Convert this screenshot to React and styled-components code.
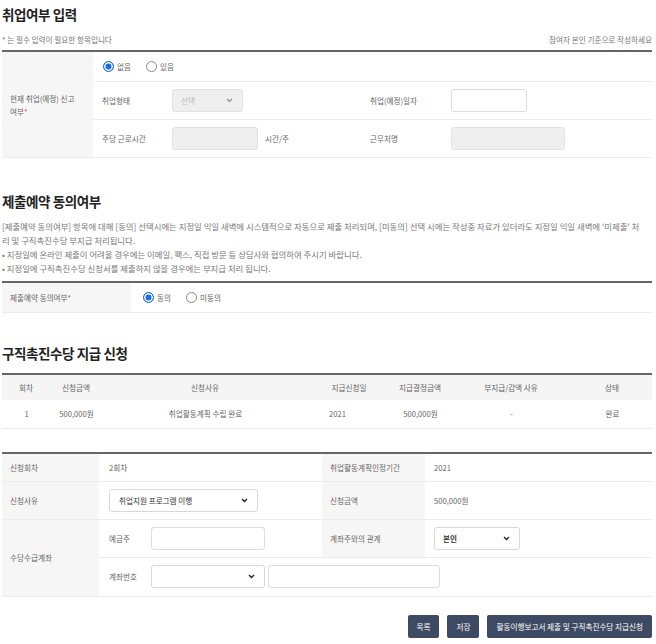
import React from "react";
import styled, { createGlobalStyle } from "styled-components";

const GlobalStyle = createGlobalStyle`
  body {
    margin: 0;
    background: #fff;
    font-family: "Noto Sans CJK KR", "Noto Sans", sans-serif;
    color: #666;
  }
  * { box-sizing: border-box; }
`;

const Page = styled.div`
  width: 654px;
  padding: 0 2px 0 2px;
`;

const Title = styled.h2`
  margin: ${p => p.$top || 0}px 0 0;
  height: 28px;
  line-height: 28px;
  font-size: 13.5px;
  font-weight: 700;
  letter-spacing: -0.4px;
  color: #222;
`;

const NoteRow = styled.div`
  height: 22px;
  display: flex;
  align-items: center;
  justify-content: space-between;
  font-size: 7.6px;
  color: #777;
`;

const Star = styled.span`
  color: #e0303a;
`;

const Desc = styled.p`
  margin: 4px 0 0;
  font-size: 8.4px;
  line-height: 14px;
  color: #777;
  white-space: nowrap;
`;

const FormGrid = styled.div`
  display: grid;
  grid-template-columns: ${p => p.$cols};
  grid-template-rows: ${p => p.$rows};
  border-top: 2px solid #666;
  margin-top: ${p => p.$top || 0}px;
  font-size: 7.6px;
`;

const Head = styled.div`
  background: #f6f6f6;
  display: flex;
  align-items: center;
  padding: 0 3px 0 8px;
  line-height: 13px;
  word-break: keep-all;
  color: #666;
  border-bottom: 1px solid #ececec;
  grid-row: ${p => (p.$rowSpan ? `span ${p.$rowSpan}` : "auto")};
`;

const Cell = styled.div`
  display: flex;
  align-items: center;
  gap: ${p => p.$gap || 0}px;
  padding-left: ${p => (p.$pl === undefined ? 9 : p.$pl)}px;
  color: #666;
  border-bottom: 1px solid #ececec;
  grid-column: ${p => p.$col || "auto"};
`;

const SubLabel = styled.span`
  width: ${p => p.$w}px;
  flex: none;
`;

const RadioGroup = styled.div`
  display: flex;
  align-items: center;
  gap: 15px;
`;

const RadioItem = styled.label`
  display: flex;
  align-items: center;
  gap: 3px;
  color: #666;
`;

const RadioDot = styled.span`
  width: 11px;
  height: 11px;
  border-radius: 50%;
  border: 1px solid ${p => (p.$checked ? "#1a6fe0" : "#888")};
  background: ${p => (p.$checked ? "#1a6fe0" : "#fff")};
  box-shadow: ${p => (p.$checked ? "inset 0 0 0 1.5px #fff" : "none")};
`;

const Field = styled.input`
  width: ${p => p.$w}px;
  height: 23px;
  border: 1px solid ${p => (p.$disabled ? "#e2e2e2" : "#dcdcdc")};
  background: ${p => (p.$disabled ? "#efefef" : "#fff")};
  border-radius: 3px;
  padding: 0 6px;
  font-family: inherit;
  font-size: 7.6px;
  outline: none;
`;

const SelectBox = styled.div`
  width: ${p => p.$w}px;
  height: 23px;
  display: flex;
  align-items: center;
  justify-content: space-between;
  padding: 0 9px 0 ${p => p.$pl || 8}px;
  border: 1px solid ${p => (p.$disabled ? "#e2e2e2" : "#d8d8d8")};
  background: ${p => (p.$disabled ? "#efefef" : "#fff")};
  border-radius: 3px;
  color: ${p => (p.$disabled ? "#bbb" : "#333")};
  font-weight: ${p => (p.$bold ? 700 : 400)};
`;

const Chevron = ({ light }) => (
  <svg width="7" height="5" viewBox="0 0 7 5">
    <path d="M1 1l2.5 2.5L6 1" fill="none" stroke={light ? "#999" : "#222"} strokeWidth="1.4" />
  </svg>
);

const Select = ({ w, value, disabled, bold, pl }) => (
  <SelectBox $w={w} $disabled={disabled} $bold={bold} $pl={pl}>
    <span>{value}</span>
    <Chevron light={disabled} />
  </SelectBox>
);

const Radio = ({ checked, children }) => (
  <RadioItem>
    <RadioDot $checked={checked} />
    {children}
  </RadioItem>
);

const ListTable = styled.table`
  width: 100%;
  border-collapse: collapse;
  table-layout: fixed;
  border-top: 2px solid #666;
  margin-top: 6px;
  font-size: 7.6px;
  color: #666;
`;

const Th = styled.th`
  height: 26px;
  background: #f5f5f5;
  font-weight: 400;
  text-align: center;
  color: #666;
`;

const Td = styled.td`
  height: 28px;
  text-align: center;
  border-bottom: 1px solid #ececec;
  padding-right: ${p => p.$pr || 0}px;
`;

const Actions = styled.div`
  display: flex;
  justify-content: flex-end;
  gap: 8px;
  margin-top: 18px;
`;

const Button = styled.button`
  height: 23px;
  padding: 0 9px;
  border: 0;
  border-radius: 2px;
  background: #3d4a63;
  color: #fff;
  font-family: inherit;
  font-size: 7.6px;
`;

const cols = [48, 52, 206, 82, 60, 122, 80];

export default function App() {
  return (
    <Page>
      <GlobalStyle />

      <Title>취업여부 입력</Title>
      <NoteRow>
        <span><Star>*</Star> 는 필수 입력이 필요한 항목입니다</span>
        <span>참여자 본인 기준으로 작성하세요</span>
      </NoteRow>
      <FormGrid $cols="91px 79px 198px 81px 1fr" $rows="30px 38px 38px">
        <Head $rowSpan={3}>
          <span>현재 취업(예정) 신고 여부<Star>*</Star></span>
        </Head>
        <Cell $col="2 / 6" $pl={10}>
          <RadioGroup>
            <Radio checked>없음</Radio>
            <Radio>있음</Radio>
          </RadioGroup>
        </Cell>
        <Cell>취업형태</Cell>
        <Cell $pl={0}><Select w={71} value="선택" disabled /></Cell>
        <Cell $pl={0}>취업(예정)일자</Cell>
        <Cell $pl={0}><Field $w={76} /></Cell>
        <Cell>주당 근로시간</Cell>
        <Cell $pl={0} $gap={7}><Field $w={86} $disabled readOnly />시간/주</Cell>
        <Cell $pl={0}>근무처명</Cell>
        <Cell $pl={0}><Field $w={114} $disabled readOnly /></Cell>
      </FormGrid>

      <Title $top={29}>제출예약 동의여부</Title>
      <Desc>
        [제출예약 동의여부] 항목에 대해 [동의] 선택시에는 지정일 익일 새벽에 시스템적으로 자동으로 제출 처리되며, [미동의] 선택 시에는 작성중 자료가 있더라도 지정일 익일 새벽에 '미제출' 처<br />
        리 및 구직촉진수당 부지급 처리됩니다.<br />
        • 지정일에 온라인 제출이 어려울 경우에는 이메일, 팩스, 직접 방문 등 상담사와 협의하여 주시기 바랍니다.<br />
        • 지정일에 구직촉진수당 신청서를 제출하지 않을 경우에는 부지급 처리 됩니다.
      </Desc>
      <FormGrid $cols="129px 1fr" $rows="30px" $top={6}>
        <Head>
          <span>제출예약 동의여부<Star>*</Star></span>
        </Head>
        <Cell $pl={12}>
          <RadioGroup>
            <Radio checked>동의</Radio>
            <Radio>미동의</Radio>
          </RadioGroup>
        </Cell>
      </FormGrid>

      <Title $top={26}>구직촉진수당 지급 신청</Title>
      <ListTable>
        <colgroup>
          {cols.map((w, i) => <col key={i} style={{ width: w }} />)}
        </colgroup>
        <thead>
          <tr>
            <Th>회차</Th>
            <Th>신청금액</Th>
            <Th>신청사유</Th>
            <Th>지급신청일</Th>
            <Th>지급결정금액</Th>
            <Th>부지급/감액 사유</Th>
            <Th>상태</Th>
          </tr>
        </thead>
        <tbody>
          <tr>
            <Td>1</Td>
            <Td>500,000원</Td>
            <Td>취업활동계획 수립 완료</Td>
            <Td $pr={24}>2021</Td>
            <Td>500,000원</Td>
            <Td>-</Td>
            <Td>완료</Td>
          </tr>
        </tbody>
      </ListTable>

      <FormGrid $cols="97px 223px 103px 1fr" $rows="28px 38px 38px 39px" $top={23}>
        <Head>신청회차</Head>
        <Cell $pl={10}>2회차</Cell>
        <Head>취업활동계획인정기간</Head>
        <Cell>2021</Cell>

        <Head>신청사유</Head>
        <Cell $pl={10}><Select w={149} value="취업지원 프로그램 이행" pl={9} /></Cell>
        <Head>신청금액</Head>
        <Cell>500,000원</Cell>

        <Head $rowSpan={2}>수당수급계좌</Head>
        <Cell $pl={10}>
          <SubLabel $w={42}>예금주</SubLabel>
          <Field $w={114} />
        </Cell>
        <Head>계좌주와의 관계</Head>
        <Cell><Select w={86} value="본인" bold /></Cell>

        <Cell $col="2 / 5" $pl={10} $gap={3}>
          <SubLabel $w={39}>계좌번호</SubLabel>
          <Select w={114} value="" />
          <Field $w={172} />
        </Cell>
      </FormGrid>

      <Actions>
        <Button>목록</Button>
        <Button>저장</Button>
        <Button>활동이행보고서 제출 및 구직촉진수당 지급신청</Button>
      </Actions>
    </Page>
  );
}
